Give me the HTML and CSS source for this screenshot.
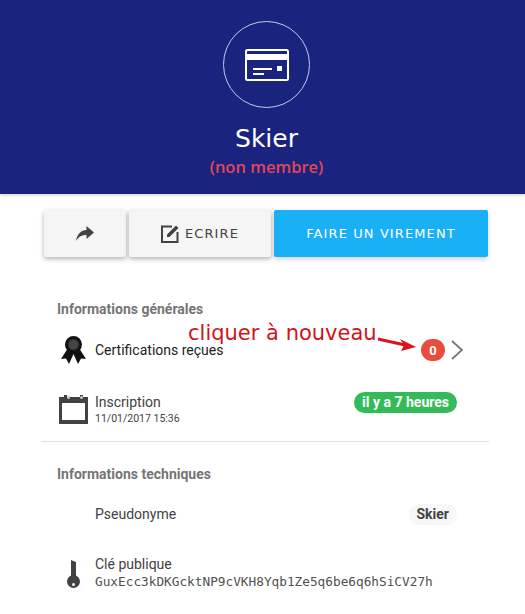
FILE: index.html
```html
<!DOCTYPE html>
<html lang="en">
<head>
  <meta charset="UTF-8">
  <title>Skier</title>
  <link rel="stylesheet" href="styles.css">
</head>
<body>
  <header class="hero">
    <div class="avatar">
      <svg width="44" height="32" viewBox="0 0 44 32">
        <rect x="1" y="1" width="42" height="30" rx="1.5" fill="none" stroke="#fff" stroke-width="2"/>
        <rect x="1" y="5" width="42" height="6" fill="#fff"/>
        <rect x="8" y="19" width="19" height="2" fill="#fff"/>
        <rect x="8" y="24" width="11" height="2" fill="#fff"/>
        <rect x="32" y="17" width="5" height="5" fill="#fff"/>
      </svg>
    </div>
    <h1 class="name">Skier</h1>
    <div class="status">(non membre)</div>
  </header>

  <div class="actions">
    <button class="btn btn-share">
      <svg width="18" height="15" viewBox="0 0 18 15"><path d="M10.500 0 L18 6.500 L10.500 13 V9 C6 9 2.500 10.500 0 15 C1 9 4 4.500 10.500 4 Z" fill="#424242"/></svg>
    </button>
    <button class="btn btn-write">
      <svg width="19" height="19" viewBox="0 0 19 19">
        <path d="M11 2.500 H1 V18 H16.500 V8" fill="none" stroke="#424242" stroke-width="2"/>
        <path d="M6 10.500 L15 1.500 L17.500 4 L8.500 13 H6 Z" fill="#424242"/>
      </svg>
      ECRIRE
    </button>
    <button class="btn btn-primary">FAIRE UN VIREMENT</button>
  </div>

  <section class="section">
    <h2 class="section-title">Informations générales</h2>
    <div class="row row-cert">
      <div class="row-icon">
        <svg width="25" height="28" viewBox="0 0 25 28">
          <path d="M7 12 L0 23 L5 22.500 L8 28 L12.500 18 L17 28 L20 22.500 L25 23 L18 12 Z" fill="#111"/>
          <circle cx="12.500" cy="8.500" r="8.500" fill="#111"/>
          <circle cx="12.500" cy="8.500" r="5.500" fill="#444" stroke="#222"/>
        </svg>
      </div>
      <div class="row-text row-dark">Certifications reçues</div>
      <span class="count">0</span>
      <svg class="chevron" width="12" height="20" viewBox="0 0 12 20"><path d="M1 1 L11 10 L1 19" fill="none" stroke="#757575" stroke-width="1.800"/></svg>
    </div>
    <div class="row row-date">
      <div class="row-icon">
        <svg width="29" height="29" viewBox="0 0 29 29">
          <path d="M0 2 H5 V0 H8 V2 H21 V0 H24 V2 H29 V29 H0 Z" fill="#424242"/>
          <rect x="3" y="8" width="23" height="17" fill="#fff"/>
          <circle cx="9.500" cy="2.500" r="1.500" fill="#c8c8c8"/>
          <circle cx="22.500" cy="2.500" r="1.500" fill="#c8c8c8"/>
        </svg>
      </div>
      <div class="row-text">
        Inscription
        <small class="row-sub">11/01/2017 15:36</small>
      </div>
      <span class="pill pill-green">il y a 7 heures</span>
    </div>
  </section>

  <section class="section section-tech">
    <h2 class="section-title">Informations techniques</h2>
    <div class="row row-nick">
      <div class="row-icon"></div>
      <div class="row-text">Pseudonyme</div>
      <span class="pill pill-grey">Skier</span>
    </div>
    <div class="row row-key">
      <div class="row-icon">
        <svg class="key" width="13" height="28" viewBox="0 0 13 28">
          <path d="M4 0 L9 2 V17 H4 Z" fill="#424242"/>
          <circle cx="6.500" cy="21.500" r="6.500" fill="#424242"/>
          <circle cx="6.500" cy="24.500" r="1.500" fill="#fff"/>
        </svg>
      </div>
      <div class="row-text">
        Clé publique
        <code class="pubkey">GuxEcc3kDKGcktNP9cVKH8Yqb1Ze5q6be6q6hSiCV27h</code>
      </div>
    </div>
  </section>

  <!-- annotation added on top of the screenshot -->
  <div class="note">cliquer à nouveau</div>
  <svg class="note-arrow" width="40" height="16" viewBox="0 0 40 16">
    <path d="M1 2 L28 8" stroke="#d8141e" stroke-width="3"/>
    <path d="M39 10 L24 14 L27 8 L23 2 Z" fill="#d8141e"/>
  </svg>
</body>
</html>
```

FILE: styles.css
```css
body {
  position: relative;
  margin: 0;
  background-color: #fff;
  font-family: Roboto, sans-serif;
  color: #424242;
}

.hero {
  display: flex;
  flex-direction: column;
  align-items: center;
  height: 194px;
  padding: 21px 0 0 8px;
  box-sizing: border-box;
  background-color: #1a237e;
  box-shadow: 0 1px 3px rgba(60, 50, 120, 0.25);
}

.avatar {
  display: flex;
  justify-content: center;
  align-items: center;
  width: 87px;
  height: 87px;
  box-sizing: border-box;
  border: 1px solid #c5cae9;
  border-radius: 50%;
}

.name {
  margin: 16px 0 0;
  font-family: "DejaVu Sans", sans-serif;
  font-size: 25px;
  font-weight: normal;
  line-height: 30px;
  color: #fff;
}

.status {
  margin-top: 3px;
  font-family: "Open Sans", sans-serif;
  font-size: 16.500px;
  font-weight: 600;
  line-height: 20px;
  color: #e0465a;
}

.actions {
  display: flex;
  gap: 3px;
  margin: 16px 37px 0 44px;
}

.btn {
  display: flex;
  justify-content: center;
  align-items: center;
  height: 47px;
  padding: 0;
  border: 0;
  border-radius: 2px;
  background-color: #f5f5f5;
  font-family: "DejaVu Sans", sans-serif;
  font-size: 13px;
  letter-spacing: 1.100px;
  color: #424242;
  box-shadow: 0 2px 5px rgba(0, 0, 0, 0.3);
}

.btn-share {
  width: 82px;
}

.btn-write {
  width: 142px;
  gap: 5px;
}

.btn-primary {
  width: 214px;
  background-color: #1ab0f6;
  color: #fff;
  box-shadow: 0 2px 5px rgba(0, 0, 0, 0.2);
}

.section {
  margin: 44px 36px 0 41px;
  padding: 0 0 0 16px;
}

.section-tech {
  margin-top: 0;
  padding-top: 24px;
  border-top: 1px solid #e0e0e0;
}

.section-title {
  margin: 0;
  font-size: 14px;
  font-weight: 700;
  line-height: 16px;
  color: #757575;
}

.row {
  display: flex;
  align-items: center;
}

.row-cert {
  height: 52px;
  margin-top: 7px;
  padding-right: 26px;
}

.row-date {
  height: 41px;
  margin-top: 13px;
  margin-bottom: 11px;
  padding-right: 32px;
}

.row-nick {
  height: 36px;
  margin-top: 14px;
  padding-right: 32px;
}

.row-key {
  height: 40px;
  margin-top: 20px;
}

.row-icon {
  display: flex;
  justify-content: center;
  width: 32px;
  margin-right: 6px;
}

.row-text {
  flex: 1;
  font-size: 14px;
  line-height: 16px;
  color: #424242;
}

.row-dark {
  color: #212121;
}

.row-sub {
  display: block;
  margin-top: 3px;
  font-size: 10.500px;
  line-height: 12px;
}

.pubkey {
  display: block;
  margin-top: 3px;
  font-family: "DejaVu Sans Mono", monospace;
  font-size: 12.750px;
  line-height: 13px;
  white-space: nowrap;
  color: #505050;
}

.count {
  display: flex;
  justify-content: center;
  align-items: center;
  width: 24px;
  height: 22px;
  border-radius: 11px;
  background-color: #e74c3c;
  font-size: 13px;
  font-weight: 700;
  color: #fff;
}

.chevron {
  margin-left: 6px;
}

.key {
  margin-top: 4px;
}

.pill {
  padding: 0 8px;
  border-radius: 11px;
  font-size: 14px;
  font-weight: 700;
  line-height: 21px;
}

.pill-green {
  margin-bottom: 14px;
  background-color: #33bb5a;
  color: #fff;
}

.pill-grey {
  background-color: #f7f7f7;
  color: #424242;
}

.note {
  position: absolute;
  left: 188px;
  top: 320px;
  font-family: "DejaVu Sans", sans-serif;
  font-size: 21px;
  line-height: 26px;
  color: #d0141c;
}

.note-arrow {
  position: absolute;
  left: 377px;
  top: 337px;
}
```
